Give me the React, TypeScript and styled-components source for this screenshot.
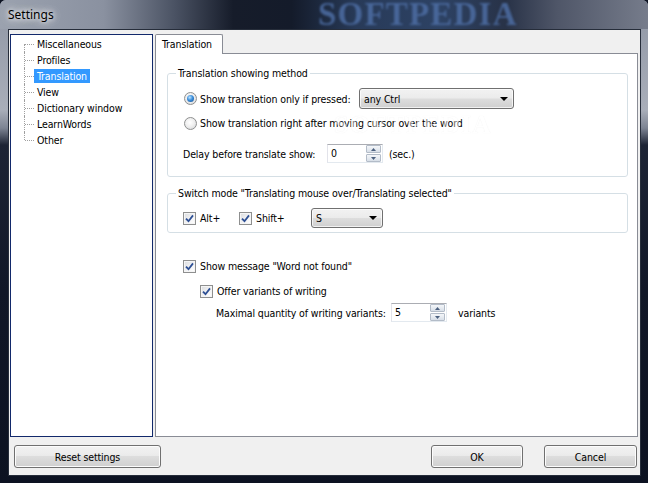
import React from "react";
import styled, { createGlobalStyle } from "styled-components";

const uiFont = `"DejaVu Sans Condensed", "Liberation Sans", sans-serif`;

const GlobalStyle = createGlobalStyle`
  html, body {
    margin: 0;
    padding: 0;
    background: #0d1322;
  }
  body {
    width: 648px;
    height: 483px;
    overflow: hidden;
  }
  * {
    box-sizing: border-box;
  }
`;

const Window = styled.div`
  position: relative;
  width: 648px;
  height: 483px;
  display: flex;
  flex-direction: column;
  background: linear-gradient(
    180deg,
    #8f96a4 0px,
    #a9aeb9 110px,
    #7d8493 128px,
    #1d2435 145px,
    #111727 60%,
    #0c1221 100%
  );
  border-radius: 6px 6px 0 0;
  overflow: hidden;
  font-family: ${uiFont};
  font-size: 10.5px;
  letter-spacing: -0.12px;
  color: #000;
`;

const TitleBar = styled.div`
  position: relative;
  flex: none;
  height: 29px;
  display: flex;
  align-items: center;
  padding-left: 8px;
  overflow: hidden;
  background: linear-gradient(
    90deg,
    #9ba2af 0%,
    #8a91a0 16%,
    #4a5263 27%,
    #161c2a 36%,
    #141b2a 45%,
    #283a58 55%,
    #2d4264 68%,
    #283247 78%,
    #4f5668 86%,
    #767c8b 100%
  );
`;

const TitleText = styled.span`
  position: relative;
  z-index: 1;
  font-family: "Noto Sans", "Open Sans", sans-serif;
  font-size: 12px;
  letter-spacing: 0;
  color: #000;
  text-shadow: 0 0 5px #fff, 0 0 9px rgba(255, 255, 255, 0.8),
    0 0 14px rgba(255, 255, 255, 0.6);
`;

const TitleWatermark = styled.span`
  position: absolute;
  left: 318px;
  top: -4px;
  font-family: "Liberation Serif", serif;
  font-weight: bold;
  font-size: 33px;
  letter-spacing: 1.2px;
  color: #4d6da3;
  filter: blur(1.2px);
  opacity: 0.85;
  pointer-events: none;
`;

const Client = styled.div`
  flex: 1;
  margin: 0 7px 7px 8px;
  border: 1px solid #262d3a;
  background: #f0f0f0;
  padding: 4px 2px 7px 1px;
  display: grid;
  grid-template-columns: 143px 483px;
  grid-template-rows: 403px 23px;
  column-gap: 2px;
  row-gap: 8px;
`;

/* ---------- tree ---------- */

const Tree = styled.ul`
  margin: 0;
  padding: 1px 0 0 0;
  list-style: none;
  background: #fff;
  border: 1px solid #12296b;
`;

const TreeRow = styled.li`
  display: flex;
  align-items: center;
  height: 16px;
`;

const Connector = styled.span<{ first?: boolean; last?: boolean }>`
  position: relative;
  flex: none;
  width: 23px;
  height: 16px;

  &::before {
    content: "";
    position: absolute;
    left: 13px;
    top: ${(p) => (p.first ? "8px" : "0")};
    bottom: ${(p) => (p.last ? "8px" : "0")};
    border-left: 1px dotted #a0a0a0;
  }
  &::after {
    content: "";
    position: absolute;
    left: 14px;
    top: 8px;
    width: 9px;
    border-top: 1px dotted #a0a0a0;
  }
`;

const TreeLabel = styled.span<{ selected?: boolean }>`
  padding: 1px 3px 0 3px;
  line-height: 13px;
  height: 14px;
  white-space: nowrap;
  background: ${(p) => (p.selected ? "#3399ff" : "transparent")};
  color: ${(p) => (p.selected ? "#fff" : "#000")};
`;

/* ---------- tabs ---------- */

const Tabs = styled.div`
  display: flex;
  flex-direction: column;
`;

const TabStrip = styled.div`
  display: flex;
  height: 19px;
  flex: none;
`;

const Tab = styled.div`
  position: relative;
  z-index: 1;
  width: 68px;
  height: 20px;
  border: 1px solid #898c95;
  border-bottom: none;
  border-radius: 2px 2px 0 0;
  background: #fff;
  padding: 3px 0 0 6px;
  line-height: 13px;
`;

const TabPage = styled.div`
  position: relative;
  flex: 1;
  border: 1px solid #898c95;
  background: #fff;
  padding: 13px 9px 0 11px;
  display: flex;
  flex-direction: column;
  overflow: hidden;
`;

const PageWatermark = styled.span`
  position: absolute;
  left: 178px;
  top: 56px;
  font-family: "Liberation Serif", serif;
  font-weight: bold;
  font-size: 26px;
  letter-spacing: 1px;
  color: #fff;
  text-shadow: 0 0 1px #dcdcdc;
  opacity: 0.45;
  pointer-events: none;
`;

/* ---------- group boxes ---------- */

const Group = styled.fieldset<{ gap?: number }>`
  margin: ${(p) => p.gap ?? 0}px 0 0 0;
  padding: 0;
  min-width: 0;
  border: 1px solid #d5dfe5;
  border-radius: 3px;
`;

const GroupTitle = styled.legend`
  margin-left: 8px;
  padding: 0 2px;
  line-height: 13px;
`;

const GroupBody = styled.div<{ top: number; bottom: number }>`
  padding: ${(p) => p.top}px 0 ${(p) => p.bottom}px 15px;
  display: flex;
  flex-direction: column;
`;

const Row = styled.div<{ h: number; mt?: number; ml?: number }>`
  display: flex;
  align-items: center;
  height: ${(p) => p.h}px;
  margin-top: ${(p) => p.mt ?? 0}px;
  margin-left: ${(p) => p.ml ?? 0}px;
  white-space: nowrap;
`;

const Label = styled.span<{ w?: number }>`
  flex: none;
  width: ${(p) => (p.w ? `${p.w}px` : "auto")};
  display: flex;
  align-items: center;
  gap: 3px;
`;

const Text = styled.span<{ ml?: number }>`
  margin-left: ${(p) => p.ml ?? 0}px;
`;

/* ---------- controls ---------- */

const RadioDot = styled.span<{ checked?: boolean }>`
  position: relative;
  flex: none;
  width: 13px;
  height: 13px;
  border-radius: 50%;
  border: 1px solid #8e8f8f;
  background: radial-gradient(circle at 45% 40%, #ffffff 0%, #f0f0f0 45%, #cfd1d4 100%);

  &::after {
    content: "";
    display: ${(p) => (p.checked ? "block" : "none")};
    position: absolute;
    left: 2px;
    top: 2px;
    width: 7px;
    height: 7px;
    border-radius: 50%;
    background: radial-gradient(circle at 40% 35%, #bfe6ff 0%, #3c8fdc 45%, #114a8c 100%);
  }
`;

const CheckBox = styled.span`
  flex: none;
  width: 13px;
  height: 13px;
  border: 1px solid #8e8f8f;
  background: linear-gradient(135deg, #dadcdf 0%, #f4f4f5 60%, #ffffff 100%);
  box-shadow: inset 0 0 0 1px #f5f5f5;
  display: flex;
  align-items: center;
  justify-content: center;
`;

const Combo = styled.div<{ w: number; h: number }>`
  flex: none;
  width: ${(p) => p.w}px;
  height: ${(p) => p.h}px;
  border: 1px solid #707070;
  border-radius: 3px;
  background: linear-gradient(180deg, #f2f2f2 0%, #ebebeb 48%, #dddddd 52%, #cfcfcf 100%);
  box-shadow: inset 0 0 0 1px rgba(255, 255, 255, 0.7);
  display: flex;
  align-items: center;
  justify-content: space-between;
  padding: 0 4px 0 4px;
`;

const Arrow = styled.span`
  width: 0;
  height: 0;
  border-left: 4px solid transparent;
  border-right: 4px solid transparent;
  border-top: 4px solid #000;
  margin-right: 1px;
`;

const Spin = styled.div`
  flex: none;
  width: 56px;
  height: 19px;
  border: 1px solid #abadb3;
  border-right-color: #e3e9ef;
  border-bottom-color: #e3e9ef;
  border-left-color: #e2e3ea;
  background: #fff;
  display: flex;
`;

const SpinValue = styled.span`
  flex: 1;
  padding: 1px 0 0 3px;
  line-height: 15px;
`;

const SpinButtons = styled.div`
  flex: none;
  width: 16px;
  display: flex;
  flex-direction: column;
  gap: 1px;
  padding: 0 1px 0 0;
`;

const SpinButton = styled.span`
  flex: 1;
  border: 1px solid #b3bcc8;
  border-radius: 1px;
  background: linear-gradient(180deg, #f4f6f9 0%, #e6ebf1 50%, #d7dee7 100%);
  display: flex;
  align-items: center;
  justify-content: center;
`;

const BottomBar = styled.div`
  grid-column: 1 / -1;
  display: flex;
  justify-content: space-between;
  padding: 0 1px 0 4px;
`;

const ButtonGroup = styled.div`
  display: flex;
  gap: 21px;
`;

const Button = styled.button<{ w: number }>`
  width: ${(p) => p.w}px;
  height: 23px;
  margin: 0;
  padding: 0;
  border: 1px solid #707070;
  border-radius: 3px;
  background: linear-gradient(180deg, #f2f2f2 0%, #ebebeb 45%, #dddddd 50%, #cfcfcf 100%);
  box-shadow: inset 0 0 0 1px #fcfcfc;
  font-family: ${uiFont};
  font-size: 10.5px;
  letter-spacing: -0.12px;
  color: #000;
`;

/* ---------- small pieces ---------- */

function Radio({ checked, children, w }: { checked?: boolean; children: React.ReactNode; w?: number }) {
  return (
    <Label w={w}>
      <RadioDot checked={checked} />
      <span>{children}</span>
    </Label>
  );
}

function Check({ children, w }: { children: React.ReactNode; w?: number }) {
  return (
    <Label w={w}>
      <CheckBox>
        <svg width="9" height="9" viewBox="0 0 9 9">
          <path d="M1 4.6 L3.5 7.2 L8 1.4" fill="none" stroke="#2d4f94" strokeWidth="1.8" />
        </svg>
      </CheckBox>
      <Text ml={1}>{children}</Text>
    </Label>
  );
}

function SpinEdit({ value }: { value: string }) {
  return (
    <Spin>
      <SpinValue>{value}</SpinValue>
      <SpinButtons>
        <SpinButton>
          <svg width="5" height="3" viewBox="0 0 5 3">
            <path d="M0 3 L2.5 0 L5 3 Z" fill="#4c607f" />
          </svg>
        </SpinButton>
        <SpinButton>
          <svg width="5" height="3" viewBox="0 0 5 3">
            <path d="M0 0 L2.5 3 L5 0 Z" fill="#4c607f" />
          </svg>
        </SpinButton>
      </SpinButtons>
    </Spin>
  );
}

const treeItems = [
  "Miscellaneous",
  "Profiles",
  "Translation",
  "View",
  "Dictionary window",
  "LearnWords",
  "Other",
];

export default function App() {
  return (
    <>
      <GlobalStyle />
      <Window>
        <TitleBar>
          <TitleText>Settings</TitleText>
          <TitleWatermark>SOFTPEDIA</TitleWatermark>
        </TitleBar>

        <Client>
          <Tree>
            {treeItems.map((item, i) => (
              <TreeRow key={item}>
                <Connector first={i === 0} last={i === treeItems.length - 1} />
                <TreeLabel selected={item === "Translation"}>{item}</TreeLabel>
              </TreeRow>
            ))}
          </Tree>

          <Tabs>
            <TabStrip>
              <Tab>Translation</Tab>
            </TabStrip>
            <TabPage>
              <PageWatermark>SOFTPEDIA</PageWatermark>

              <Group>
                <GroupTitle>Translation showing method</GroupTitle>
                <GroupBody top={8} bottom={13}>
                  <Row h={21} ml={1}>
                    <Radio checked w={175}>
                      Show translation only if pressed:
                    </Radio>
                    <Combo w={155} h={21}>
                      <span>any Ctrl</span>
                      <Arrow />
                    </Combo>
                  </Row>
                  <Row h={16} mt={6} ml={1}>
                    <Radio>Show translation right after moving cursor over the word</Radio>
                  </Row>
                  <Row h={19} mt={13}>
                    <Label w={144}>Delay before translate show:</Label>
                    <SpinEdit value="0" />
                    <Text ml={6}>(sec.)</Text>
                  </Row>
                </GroupBody>
              </Group>

              <Group gap={10}>
                <GroupTitle>Switch mode "Translating mouse over/Translating selected"</GroupTitle>
                <GroupBody top={8} bottom={4}>
                  <Row h={20}>
                    <Check w={56}>Alt+</Check>
                    <Check w={72}>Shift+</Check>
                    <Combo w={72} h={20}>
                      <span>S</span>
                      <Arrow />
                    </Combo>
                  </Row>
                </GroupBody>
              </Group>

              <Row h={16} mt={25} ml={16}>
                <Check>Show message "Word not found"</Check>
              </Row>
              <Row h={16} mt={9} ml={33}>
                <Check>Offer variants of writing</Check>
              </Row>
              <Row h={19} mt={4} ml={49}>
                <Label w={175}>Maximal quantity of writing variants:</Label>
                <SpinEdit value="5" />
                <Text ml={11}>variants</Text>
              </Row>
            </TabPage>
          </Tabs>

          <BottomBar>
            <Button w={147}>Reset settings</Button>
            <ButtonGroup>
              <Button w={92}>OK</Button>
              <Button w={93}>Cancel</Button>
            </ButtonGroup>
          </BottomBar>
        </Client>
      </Window>
    </>
  );
}
